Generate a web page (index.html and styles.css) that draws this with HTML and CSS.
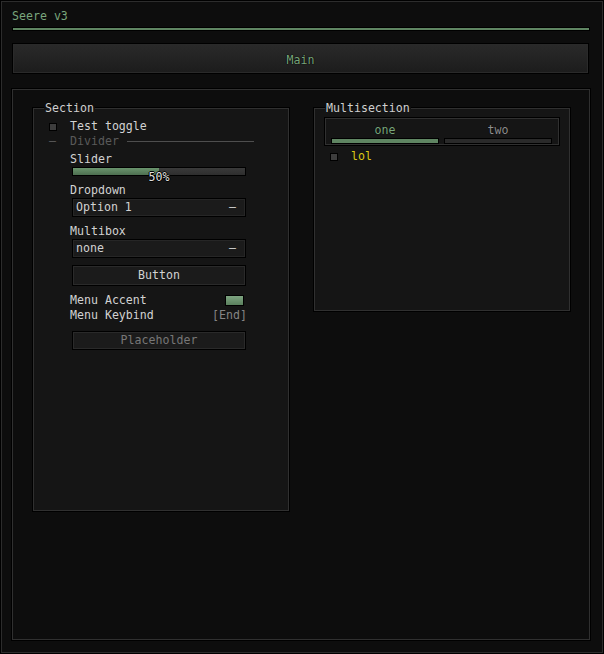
FILE: index.html
```html
<!DOCTYPE html>
<html lang="en">
<head>
    <meta charset="UTF-8">
    <title>Seere v3</title>
    <link rel="stylesheet" href="styles.css">
</head>
<body>
    <div class="window">
        <div class="win-title">Seere v3</div>
        <div class="accent-line"></div>

        <div class="tab-bar">
            <div class="tab active">Main</div>
        </div>

        <div class="frame">
            <!-- Left section -->
            <div class="section section-main">
                <span class="section-title">Section</span>

                <div class="toggle-row">
                    <span class="checkbox"></span>
                    <span>Test toggle</span>
                </div>

                <div class="divider-row">
                    <span class="dash">&ndash;</span>
                    <span class="divider-text">Divider</span>
                    <span class="divider-line"></span>
                </div>

                <div class="label label-slider">Slider</div>
                <div class="slider">
                    <div class="slider-fill" style="width: 50%"></div>
                </div>
                <div class="slider-value">50%</div>

                <div class="label label-dropdown">Dropdown</div>
                <div class="select">
                    <span>Option 1</span>
                    <span class="select-dash">&ndash;</span>
                </div>

                <div class="label label-multibox">Multibox</div>
                <div class="select">
                    <span>none</span>
                    <span class="select-dash">&ndash;</span>
                </div>

                <div class="button">Button</div>

                <div class="option-row accent-row">
                    <span>Menu Accent</span>
                    <span class="swatch"></span>
                </div>
                <div class="option-row">
                    <span>Menu Keybind</span>
                    <span class="keybind">[End]</span>
                </div>

                <div class="button placeholder">Placeholder</div>
            </div>

            <!-- Right section -->
            <div class="section section-multi">
                <span class="section-title">Multisection</span>

                <div class="sub-tabs">
                    <div class="sub-tab active">one</div>
                    <div class="sub-tab">two</div>
                </div>

                <div class="toggle-row lol-row">
                    <span class="checkbox"></span>
                    <span class="lol">lol</span>
                </div>
            </div>
        </div>
    </div>
</body>
</html>
```

FILE: styles.css
```css
:root {
    --bg: #0d0d0d;
    --panel: #151515;
    --edge: #303030;
    --accent: #5f8562;
    --accent-text: #79a67c;
    --text: #d2d2d2;
}

* {
    box-sizing: border-box;
}

body {
    margin: 0;
    background: var(--bg);
    color: var(--text);
    font-family: "DejaVu Sans Mono", "Liberation Mono", monospace;
    font-size: 11.6px;
    line-height: 15px;
}

.window {
    width: 604px;
    height: 654px;
    border: 1px solid #000;
    box-shadow: inset 0 0 0 1px #2c2c2c;
    padding-top: 8px;
    overflow: hidden;
}

.win-title {
    margin-left: 11px;
    color: var(--accent-text);
}

.accent-line {
    margin: 3px 13px 0 11px;
    height: 4px;
    border: 1px solid #000;
    background: var(--accent);
}

/* Top tabs */
.tab-bar {
    margin: 12px 14px 0 11px;
    display: flex;
}

.tab {
    flex: 1;
    height: 31px;
    padding-top: 3px;
    border: 1px solid #000;
    box-shadow: inset 0 0 0 1px #2a2a2a;
    background: linear-gradient(#2a2a2a, #1c1c1c);
    display: flex;
    align-items: center;
    justify-content: center;
}

.tab.active {
    color: var(--accent-text);
    text-shadow: 0 0 1px #000, 0 0 1px #000;
}

/* Content frame */
.frame {
    margin: 14px 12px 0 10px;
    height: 553px;
    border: 1px solid #000;
    box-shadow: inset 0 0 0 1px var(--edge);
    padding: 19px 20px 0 21px;
    display: grid;
    grid-template-columns: 256px 256px;
    column-gap: 25px;
    align-items: start;
}

.section {
    position: relative;
    padding: 10px 0 0 15px;
    border: 1px solid var(--edge);
    box-shadow: 0 0 0 1px #000;
    background: var(--panel);
}

/* title sits over the top border, like a legend */
.section-title {
    position: absolute;
    top: -8px;
    left: 10px;
    padding: 0 1px;
    line-height: 14px;
    color: #cfcfcf;
    background: linear-gradient(var(--bg) 50%, var(--panel) 50%);
}

.section-main {
    height: 403px;
}

.section-multi {
    height: 203px;
    padding-left: 9px;
    padding-top: 8px;
}

/* Toggle */
.toggle-row {
    display: flex;
    align-items: center;
    height: 15px;
    gap: 13px;
}

.checkbox {
    width: 8px;
    height: 8px;
    border: 1px solid #000;
    background: #3d3d3d;
}

/* Divider */
.divider-row {
    display: flex;
    align-items: center;
    height: 15px;
    color: #5a5a5a;
}

.dash {
    width: 21px;
}

.divider-line {
    width: 127px;
    height: 1px;
    margin-left: 8px;
    background: #4e4e4e;
}

.label {
    margin-left: 21px;
}

.label-slider {
    margin-top: 3px;
}

/* Slider */
.slider {
    margin: 0 0 0 23px;
    width: 174px;
    height: 9px;
    border: 1px solid #000;
    background: linear-gradient(#3a3a3a, #2e2e2e);
}

.slider-fill {
    height: 100%;
    background: linear-gradient(#6a946d, #4d6f50);
}

.slider-value {
    margin: -5px 0 0 23px;
    width: 174px;
    line-height: 13px;
    text-align: center;
    color: #e0e0e0;
    text-shadow: 1px 0 #000, -1px 0 #000, 0 1px #000, 0 -1px #000;
}

.label-dropdown {
    margin-top: -1px;
}

/* Dropdown / multibox */
.select {
    margin: 0 0 0 23px;
    width: 174px;
    height: 19px;
    padding: 0 9px 0 3px;
    border: 1px solid #000;
    box-shadow: inset 0 0 0 1px #262626;
    background: #1b1b1b;
    display: flex;
    align-items: center;
    justify-content: space-between;
}

.label-multibox {
    margin-top: 7px;
}

.button {
    margin: 7px 0 0 23px;
    width: 174px;
    height: 21px;
    border: 1px solid #000;
    box-shadow: inset 0 0 0 1px #2a2a2a;
    background: #1b1b1b;
    display: flex;
    align-items: center;
    justify-content: center;
}

.button.placeholder {
    margin-top: 8px;
    height: 19px;
    color: #777;
}

/* Option rows */
.option-row {
    margin-left: 21px;
    width: 177px;
    display: flex;
    align-items: center;
    justify-content: space-between;
}

.accent-row {
    margin-top: 7px;
}

.swatch {
    width: 19px;
    height: 11px;
    margin-right: 3px;
    border: 1px solid #000;
    background: linear-gradient(#7ea481, #5a805d);
}

.keybind {
    color: #848484;
}

/* Multisection tabs */
.sub-tabs {
    width: 236px;
    height: 29px;
    border: 1px solid #000;
    box-shadow: inset 0 0 0 1px var(--edge);
    padding: 5px 7px 0 6px;
    display: flex;
    gap: 5px;
}

.sub-tab {
    flex: 1;
    text-align: center;
    line-height: 15px;
    color: #8e8e8e;
    text-shadow: 0 0 1px #000;
}

.sub-tab::after {
    content: "";
    display: block;
    height: 4px;
    margin-top: 0;
    border: 1px solid #000;
    background: #2a2a2a;
}

.sub-tab.active {
    color: var(--accent-text);
}

.sub-tab.active::after {
    background: var(--accent);
}

.lol-row {
    margin: 3px 0 0 6px;
}

.lol {
    color: #dcc814;
}
```
